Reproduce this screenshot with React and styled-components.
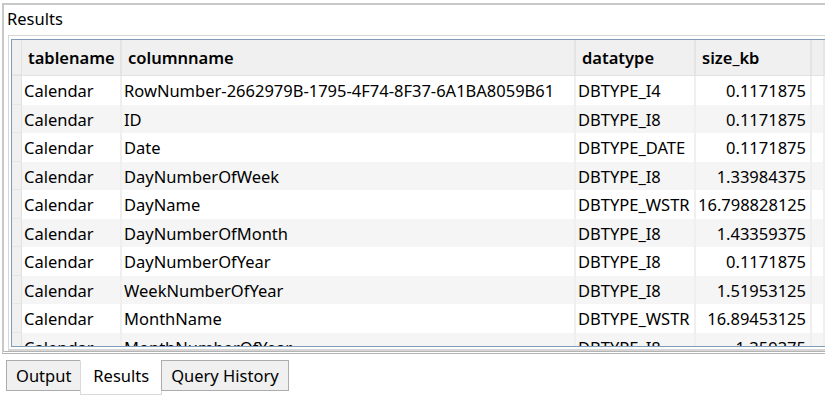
import styled, { createGlobalStyle } from 'styled-components'

const rows = [
	['Calendar', 'RowNumber-2662979B-1795-4F74-8F37-6A1BA8059B61', 'DBTYPE_I4', '0.1171875'],
	['Calendar', 'ID', 'DBTYPE_I8', '0.1171875'],
	['Calendar', 'Date', 'DBTYPE_DATE', '0.1171875'],
	['Calendar', 'DayNumberOfWeek', 'DBTYPE_I8', '1.33984375'],
	['Calendar', 'DayName', 'DBTYPE_WSTR', '16.798828125'],
	['Calendar', 'DayNumberOfMonth', 'DBTYPE_I8', '1.43359375'],
	['Calendar', 'DayNumberOfYear', 'DBTYPE_I8', '0.1171875'],
	['Calendar', 'WeekNumberOfYear', 'DBTYPE_I8', '1.51953125'],
	['Calendar', 'MonthName', 'DBTYPE_WSTR', '16.89453125'],
	['Calendar', 'MonthNumberOfYear', 'DBTYPE_I8', '1.359375'],
]

const cols = '10px 100px 454px 120px 116px 1fr'

const App = () => {
	return (
		<>
			<Global />
			<Page>
				<Panel>
					<Title>Results</Title>
					<GridFrame>
						<Grid>
							<HeaderRow>
								<RowHead />
								<HeadCell>tablename</HeadCell>
								<HeadCell>columnname</HeadCell>
								<HeadCell>datatype</HeadCell>
								<HeadCell>size_kb</HeadCell>
								<HeadCell />
							</HeaderRow>
							<Body>
								{rows.map((r, idx) => (
									<Row key={idx} odd={idx % 2 === 1}>
										<RowHead />
										<Cell>{r[0]}</Cell>
										<Cell>{r[1]}</Cell>
										<Cell>{r[2]}</Cell>
										<Cell right>{r[3]}</Cell>
										<Cell />
									</Row>
								))}
							</Body>
						</Grid>
					</GridFrame>
				</Panel>
				<Tabs>
					<Tab>Output</Tab>
					<Tab active>Results</Tab>
					<Tab>Query History</Tab>
				</Tabs>
			</Page>
		</>
	)
}

const Global = createGlobalStyle`
	body {
		margin: 0;
		background: #fff;
		font-family: "Noto Sans", "Open Sans", sans-serif;
		color: #000;
	}
`

const Page = styled.div`
	width: 825px;
	height: 396px;
	overflow: hidden;
	padding: 3px 0 0 2px;
	box-sizing: border-box;
`

const Panel = styled.div`
	border: 2px solid #c8c8c8;
	border-right: none;
	border-bottom: 3px double #b4b4b4;
	height: 351px;
	box-sizing: border-box;
	display: flex;
	flex-direction: column;
`

const Title = styled.div`
	font-size: 16.5px;
	height: 30px;
	line-height: 28px;
	padding-left: 3px;
`

const GridFrame = styled.div`
	flex: 1;
	margin-left: 4px;
	border-top: 1px solid #d6d6d6;
	border-left: 1px solid #d6d6d6;
	border-bottom: 2px solid #d6d6d6;
	padding: 3px 0 2px 2px;
	display: flex;
	min-height: 0;
`

const Grid = styled.div`
	flex: 1;
	border: 1px solid #7f9db9;
	border-right: none;
	display: flex;
	flex-direction: column;
	overflow: hidden;
`

const HeaderRow = styled.div`
	display: grid;
	grid-template-columns: ${cols};
	height: 35px;
	background: #f0f0f0;
	border-bottom: 1px solid #e2e2e2;
	flex-shrink: 0;
`

const RowHead = styled.div`
	background: #f0f0f0;
	border-right: 1px solid #e2e2e2;
	border-bottom: 1px solid #e6e6e6;
`

const HeadCell = styled.div`
	font-size: 16.5px;
	font-weight: 600;
	padding-left: 6px;
	line-height: 36px;
	border-right: 2px solid #e4e4e4;
	white-space: nowrap;
	overflow: hidden;
`

const Body = styled.div`
	flex: 1;
	overflow: hidden;
`

const Row = styled.div`
	display: grid;
	grid-template-columns: ${cols};
	height: 28.5px;
	background: ${props => props.odd ? '#f5f5f5' : '#fff'};
`

const Cell = styled.div`
	font-size: 16.5px;
	line-height: 29px;
	padding: 0 4px 0 2px;
	text-align: ${props => props.right ? 'right' : 'left'};
	border-right: 2px solid #efefef;
	white-space: nowrap;
	overflow: hidden;
`

const Tabs = styled.div`
	display: flex;
	align-items: flex-end;
	padding-left: 4px;
	height: 41px;
`

const Tab = styled.div`
	font-size: 16.5px;
	padding: 0 ${props => props.active ? '12px' : '9px'};
	height: ${props => props.active ? '35px' : '31px'};
	line-height: 30px;
	margin-bottom: ${props => props.active ? '0' : '4px'};
	background: ${props => props.active ? '#fff' : '#f0f0f0'};
	border: 1px solid ${props => props.active ? '#d9d9d9' : '#acacac'};
	border-top-color: ${props => props.active ? '#fff' : '#acacac'};
	margin-right: -1px;
	box-sizing: border-box;
`

export default App
